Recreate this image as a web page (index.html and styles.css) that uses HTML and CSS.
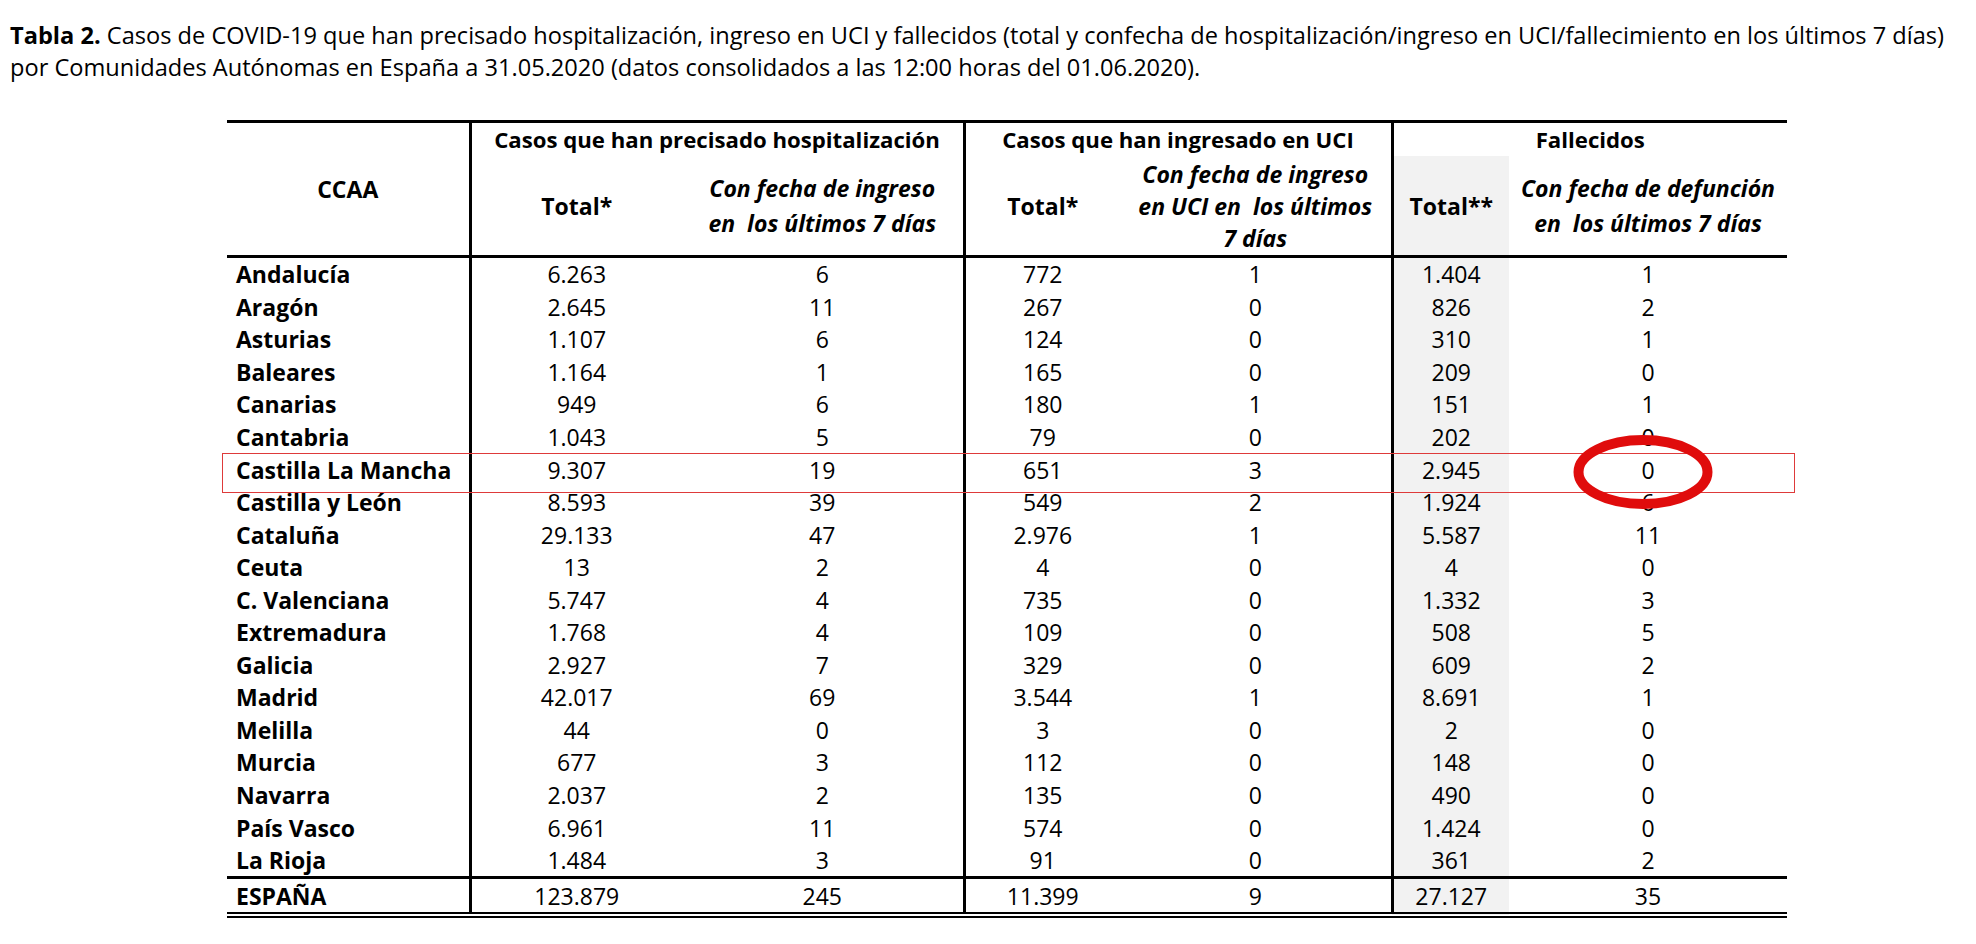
FILE: index.html
```html
<!DOCTYPE html>
<html lang="es">
<head>
<meta charset="utf-8">
<title>Tabla 2</title>
<link rel="stylesheet" href="styles.css">
</head>
<body>
<p class="caption"><b>Tabla 2.</b> Casos de COVID-19 que han precisado hospitalización, ingreso en UCI y fallecidos (total y confecha de hospitalización/ingreso en UCI/fallecimiento en los últimos 7 días)<br>por Comunidades Autónomas en España a 31.05.2020 (datos consolidados a las 12:00 horas del 01.06.2020).</p>

<div class="table-wrap">
<table class="data">
<colgroup>
<col class="c-ccaa"><col class="c-h1"><col class="c-h2"><col class="c-u1"><col class="c-u2"><col class="c-f1"><col class="c-f2">
</colgroup>
<thead>
<tr class="group-row">
<th rowspan="2" class="ccaa-head sep">CCAA</th>
<th colspan="2" class="sep">Casos que han precisado hospitalización</th>
<th colspan="2" class="sep">Casos que han ingresado en UCI</th>
<th colspan="2">Fallecidos</th>
</tr>
<tr class="sub-row">
<th>Total*</th>
<th class="it two sep">Con fecha de ingreso<br>en&nbsp; los últimos 7 días</th>
<th>Total*</th>
<th class="it sep">Con fecha de ingreso<br>en UCI en&nbsp; los últimos<br>7 días</th>
<th class="shade">Total**</th>
<th class="it two">Con fecha de defunción<br>en&nbsp; los últimos 7 días</th>
</tr>
</thead>
<tbody>
<tr><td class="name sep">Andalucía</td><td>6.263</td><td class="sep">6</td><td>772</td><td class="sep">1</td><td class="shade">1.404</td><td>1</td></tr>
<tr><td class="name sep">Aragón</td><td>2.645</td><td class="sep">11</td><td>267</td><td class="sep">0</td><td class="shade">826</td><td>2</td></tr>
<tr><td class="name sep">Asturias</td><td>1.107</td><td class="sep">6</td><td>124</td><td class="sep">0</td><td class="shade">310</td><td>1</td></tr>
<tr><td class="name sep">Baleares</td><td>1.164</td><td class="sep">1</td><td>165</td><td class="sep">0</td><td class="shade">209</td><td>0</td></tr>
<tr><td class="name sep">Canarias</td><td>949</td><td class="sep">6</td><td>180</td><td class="sep">1</td><td class="shade">151</td><td>1</td></tr>
<tr><td class="name sep">Cantabria</td><td>1.043</td><td class="sep">5</td><td>79</td><td class="sep">0</td><td class="shade">202</td><td>0</td></tr>
<tr><td class="name sep">Castilla La Mancha</td><td>9.307</td><td class="sep">19</td><td>651</td><td class="sep">3</td><td class="shade">2.945</td><td>0</td></tr>
<tr><td class="name sep">Castilla y León</td><td>8.593</td><td class="sep">39</td><td>549</td><td class="sep">2</td><td class="shade">1.924</td><td>6</td></tr>
<tr><td class="name sep">Cataluña</td><td>29.133</td><td class="sep">47</td><td>2.976</td><td class="sep">1</td><td class="shade">5.587</td><td>11</td></tr>
<tr><td class="name sep">Ceuta</td><td>13</td><td class="sep">2</td><td>4</td><td class="sep">0</td><td class="shade">4</td><td>0</td></tr>
<tr><td class="name sep">C. Valenciana</td><td>5.747</td><td class="sep">4</td><td>735</td><td class="sep">0</td><td class="shade">1.332</td><td>3</td></tr>
<tr><td class="name sep">Extremadura</td><td>1.768</td><td class="sep">4</td><td>109</td><td class="sep">0</td><td class="shade">508</td><td>5</td></tr>
<tr><td class="name sep">Galicia</td><td>2.927</td><td class="sep">7</td><td>329</td><td class="sep">0</td><td class="shade">609</td><td>2</td></tr>
<tr><td class="name sep">Madrid</td><td>42.017</td><td class="sep">69</td><td>3.544</td><td class="sep">1</td><td class="shade">8.691</td><td>1</td></tr>
<tr><td class="name sep">Melilla</td><td>44</td><td class="sep">0</td><td>3</td><td class="sep">0</td><td class="shade">2</td><td>0</td></tr>
<tr><td class="name sep">Murcia</td><td>677</td><td class="sep">3</td><td>112</td><td class="sep">0</td><td class="shade">148</td><td>0</td></tr>
<tr><td class="name sep">Navarra</td><td>2.037</td><td class="sep">2</td><td>135</td><td class="sep">0</td><td class="shade">490</td><td>0</td></tr>
<tr><td class="name sep">País Vasco</td><td>6.961</td><td class="sep">11</td><td>574</td><td class="sep">0</td><td class="shade">1.424</td><td>0</td></tr>
<tr><td class="name sep">La Rioja</td><td>1.484</td><td class="sep">3</td><td>91</td><td class="sep">0</td><td class="shade">361</td><td>2</td></tr>
</tbody>
<tfoot>
<tr class="total-row"><td class="name sep">ESPAÑA</td><td>123.879</td><td class="sep">245</td><td>11.399</td><td class="sep">9</td><td class="shade">27.127</td><td>35</td></tr>
</tfoot>
</table>

<div class="mark-row"></div>
<svg class="mark-circle" width="144" height="78" viewBox="0 0 144 78" aria-hidden="true">
<ellipse cx="72" cy="39" rx="64.5" ry="32" fill="none" stroke="#e00c0c" stroke-width="10"/>
</svg>
</div>
</body>
</html>
```
FILE: styles.css
```css
html, body {
  margin: 0;
  background: #ffffff;
}

body {
  font-family: "Open Sans", "Liberation Sans", sans-serif;
  color: #000000;
}

.caption {
  margin: 0;
  padding: 19px 0 0 10px;
  font-size: 23.6px;
  line-height: 32px;
  white-space: nowrap;
}

.caption b {
  font-weight: 700;
}

.table-wrap {
  position: relative;
  width: 1560px;
  margin: 37px 0 0 227px;
}

.data {
  border-collapse: collapse;
  table-layout: fixed;
  width: 1560px;
  font-size: 23px;
}

.c-ccaa { width: 243px; }
.c-h1 { width: 212px; }
.c-h2 { width: 282px; }
.c-u1 { width: 156px; }
.c-u2 { width: 272px; }
.c-f1 { width: 117px; }
.c-f2 { width: 278px; }

.data th,
.data td {
  padding: 0;
  text-align: center;
  vertical-align: middle;
  white-space: nowrap;
}

.data thead tr.group-row th {
  border-top: 3px solid #000;
  height: 33px;
  font-weight: 700;
  font-size: 22.2px;
  line-height: 30px;
}

.data thead tr.group-row th.ccaa-head {
  font-size: 23px;
}

.data thead tr.sub-row th {
  height: 99px;
  line-height: 32px;
  font-weight: 700;
  border-bottom: 3px solid #000;
}

.data thead tr.sub-row th.two {
  line-height: 35px;
}

.data th.ccaa-head {
  border-bottom: 3px solid #000;
}

.data th.it {
  font-style: italic;
}

.data tbody td {
  height: 32.55px;
  line-height: 28px;
}

.data td.name {
  text-align: left;
  padding-left: 9px;
  font-weight: 700;
}

.data .sep {
  border-right: 3px solid #000;
}

.data .shade {
  background: #f2f2f2;
}

.data tfoot td {
  height: 33px;
  line-height: 28px;
  border-top: 3px solid #000;
  border-bottom: 6px double #000;
}

.mark-row {
  position: absolute;
  left: -5px;
  top: 333px;
  width: 1571px;
  height: 38px;
  border: 1.5px solid #de3a3a;
}

.mark-circle {
  position: absolute;
  left: 1344px;
  top: 313px;
}
```
